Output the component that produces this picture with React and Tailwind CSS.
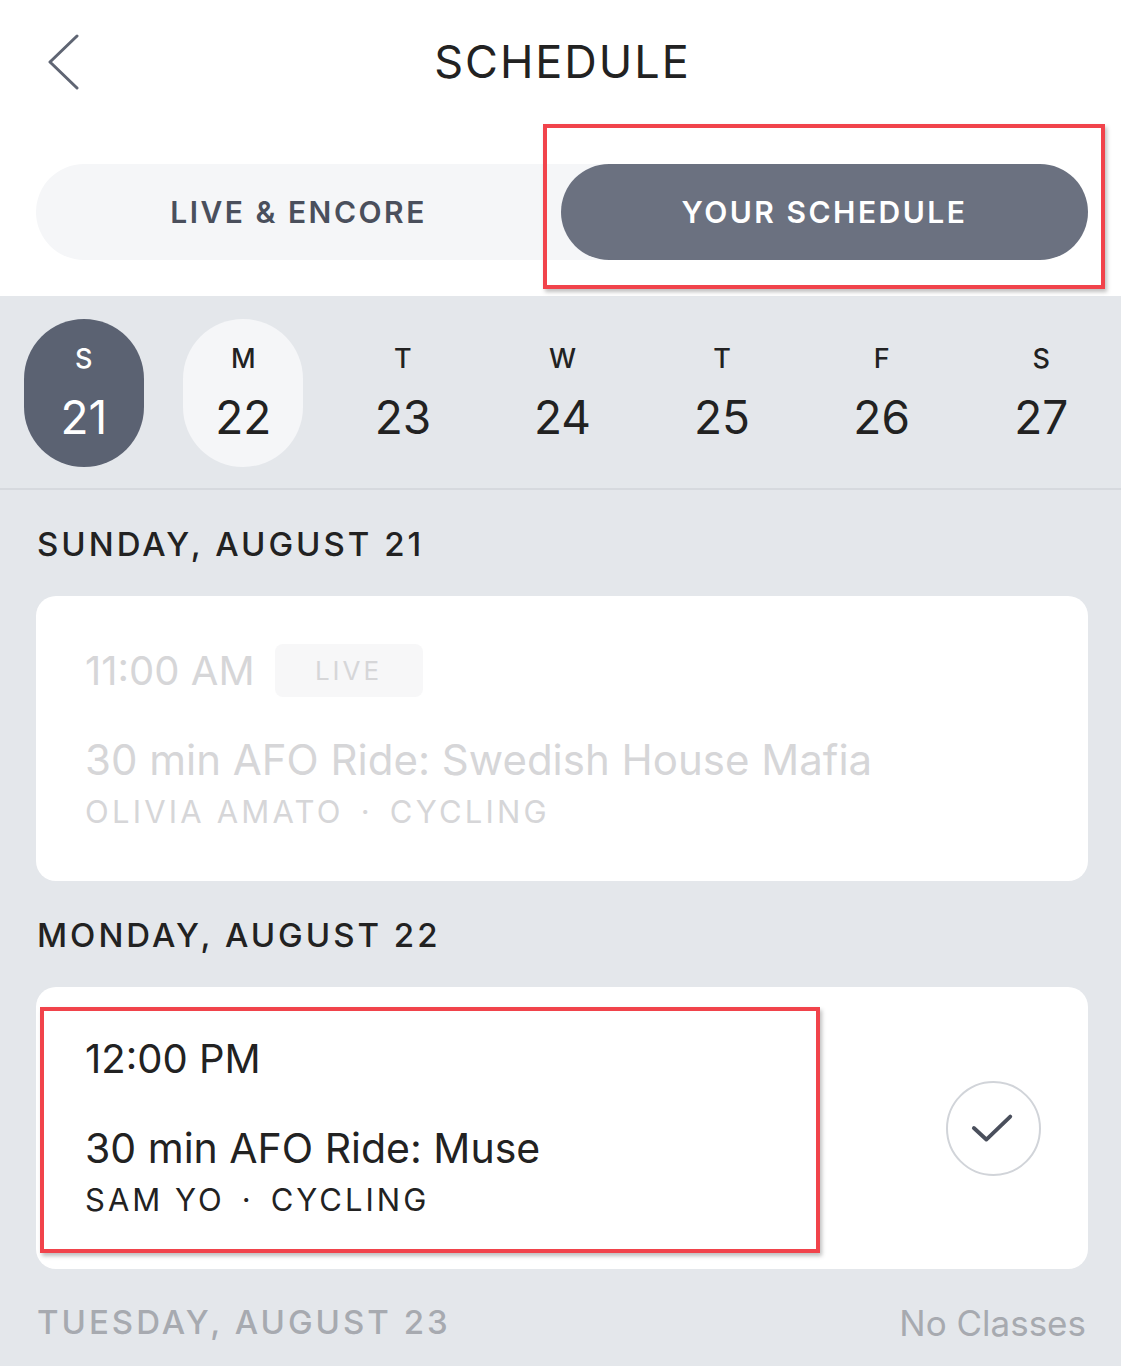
import React from "react";

const days = [
  { l: "S", n: "21", state: "sel" },
  { l: "M", n: "22", state: "light" },
  { l: "T", n: "23" },
  { l: "W", n: "24" },
  { l: "T", n: "25" },
  { l: "F", n: "26" },
  { l: "S", n: "27" },
];

export default function App() {
  return (
    <div
      className="w-[1121px] h-[1366px] overflow-hidden bg-white relative"
      style={{ fontFamily: "Inter, 'Noto Sans', sans-serif" }}
    >
      {/* Header */}
      <div className="h-[124px] grid grid-cols-[1fr_auto_1fr] items-center">
        <div className="pl-[46px] flex items-center">
          <svg width="36" height="56" viewBox="0 0 36 56" fill="none">
            <path d="M31 2 L4 28 L31 54" stroke="#5f6573" strokeWidth="3" strokeLinecap="round" strokeLinejoin="round" />
          </svg>
        </div>
        <div className="text-[45px] tracking-[2px] text-[#222222] font-normal leading-none pb-[2px] pl-[4px]">SCHEDULE</div>
        <div />
      </div>

      {/* Toggle */}
      <div className="relative pl-[36px] pr-[33px] pt-[40px] pb-[36px]">
        <div className="h-[96px] rounded-full bg-[#f5f6f8] flex">
          <div className="w-[525px] flex items-center justify-center text-[30px] font-semibold tracking-[2.5px] text-[#4a4f5c]">
            LIVE &amp; ENCORE
          </div>
          <div className="flex-1 rounded-full bg-[#6b7180] flex items-center justify-center text-[30px] font-semibold tracking-[2.5px] text-white">
            YOUR SCHEDULE
          </div>
        </div>
        <div className="absolute left-[543px] top-0 w-[562px] h-[165px] border-[4px] border-[#f1434b] shadow-[2px_3px_4px_rgba(0,0,0,0.25)] pointer-events-none" />
      </div>

      {/* Gray area */}
      <div className="bg-[#e4e7eb]">
        <div className="grid grid-cols-7 pl-[4px] pr-0 pt-[23px] pb-[21px] border-b-2 border-[#d6d9de]">
          {days.map((d, i) => (
            <div key={i} className="flex justify-center">
              <div
                className={
                  "w-[120px] h-[148px] rounded-full flex flex-col items-center pt-[26px] " +
                  (d.state === "sel"
                    ? "bg-[#5b6272] text-white"
                    : d.state === "light"
                    ? "bg-[#f5f6f8] text-[#222222]"
                    : "text-[#222222]")
                }
              >
                <div className="text-[27px] leading-[28px] font-medium">{d.l}</div>
                <div className="text-[46px] leading-[46px] mt-[21px]">{d.n}</div>
              </div>
            </div>
          ))}
        </div>

        <div className="pl-[36px] pr-[33px]">
          <div className="h-[106px] flex items-center text-[33px] tracking-[3px] text-[#222222] font-medium pl-[1px] pt-[4px]">
            SUNDAY, AUGUST 21
          </div>

          <div className="h-[285px] bg-white rounded-[20px] pl-[49px] pt-[48px]">
            <div className="flex items-center gap-[20px]">
              <div className="text-[40px] leading-[53px] text-[#d6d6d8]">11:00 AM</div>
              <div className="h-[53px] w-[148px] rounded-[8px] bg-[#f7f7f8] flex items-center justify-center text-[26px] tracking-[3px] text-[#d6d6d8]">
                LIVE
              </div>
            </div>
            <div className="mt-[38px] text-[42px] leading-[50px] text-[#d6d6d8]">
              30 min AFO Ride: Swedish House Mafia
            </div>
            <div className="mt-[8px] text-[31px] leading-[38px] tracking-[3.2px] text-[#d6d6d8] flex">
              <span>OLIVIA AMATO</span>
              <span className="mx-[17px]">·</span>
              <span>CYCLING</span>
            </div>
          </div>

          <div className="h-[106px] flex items-center text-[33px] tracking-[3px] text-[#222222] font-medium pl-[1px] pt-[4px]">
            MONDAY, AUGUST 22
          </div>

          <div className="relative h-[282px] bg-white rounded-[20px] flex">
            <div className="flex-1 pl-[49px] pt-[45px]">
              <div className="text-[40px] leading-[53px] text-[#222222]">12:00 PM</div>
              <div className="mt-[38px] text-[41px] leading-[50px] text-[#222222]">
                30 min AFO Ride: Muse
              </div>
              <div className="mt-[8px] text-[31px] leading-[38px] tracking-[3px] text-[#222222] flex">
                <span>SAM YO</span>
                <span className="mx-[17px]">·</span>
                <span>CYCLING</span>
              </div>
            </div>
            <div className="pr-[47px] flex items-center">
              <div className="w-[95px] h-[95px] rounded-full border-2 border-[#d1d4d9] flex items-center justify-center">
                <svg width="95" height="95" viewBox="0 0 95 95" fill="none">
                  <path d="M27 47 L40 59 L65 35" stroke="#4a4f5c" strokeWidth="4" strokeLinecap="round" strokeLinejoin="round" />
                </svg>
              </div>
            </div>
            <div className="absolute left-[4px] top-[20px] w-[780px] h-[246px] border-[4px] border-[#f1434b] shadow-[2px_3px_4px_rgba(0,0,0,0.25)] pointer-events-none" />
          </div>

          <div className="h-[108px] flex items-center justify-between text-[#a7aab0]">
            <div className="text-[33px] tracking-[3px] font-medium pl-[1px]">TUESDAY, AUGUST 23</div>
            <div className="text-[35px] pr-[2px]">No Classes</div>
          </div>
        </div>
      </div>
    </div>
  );
}
